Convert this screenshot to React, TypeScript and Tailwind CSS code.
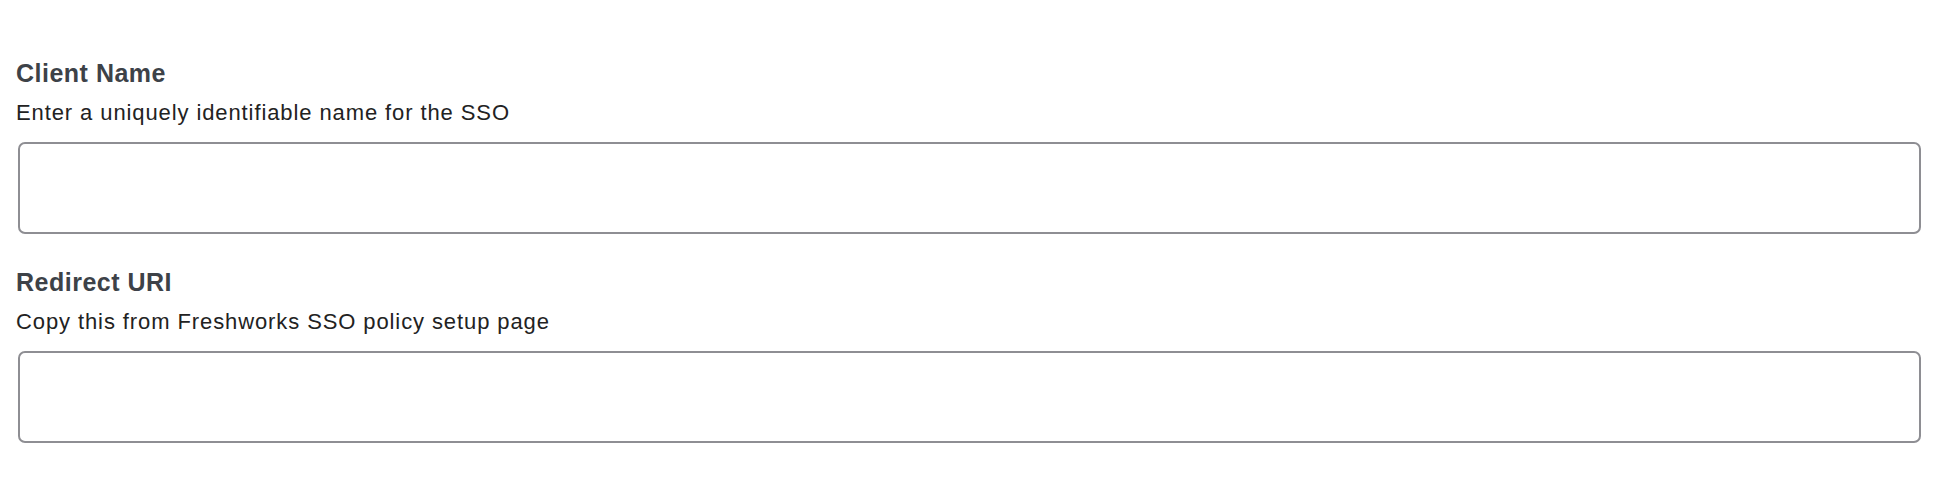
export default function App() {
  const fields = [
    { label: 'Client Name', hint: 'Enter a uniquely identifiable name for the SSO' },
    { label: 'Redirect URI', hint: 'Copy this from Freshworks SSO policy setup page' },
  ];

  return (
    <div className="min-h-screen bg-white pl-[16px] pr-[25px] pt-[58px] font-['Liberation_Sans',Arial,sans-serif]">
      {fields.map((f, i) => (
        <div key={f.label} className={i > 0 ? 'mt-[33px]' : ''}>
          <div className="text-[25px] font-bold leading-[30px] tracking-[0.5px] text-[#3d4248]">{f.label}</div>
          <div className="mt-[10px] text-[22px] leading-[30px] tracking-[0.9px] text-[#222222]">{f.hint}</div>
          <input
            type="text"
            className="mt-[14px] ml-[2px] block h-[92px] w-[calc(100%-2px)] rounded-[7px] border-2 border-[#8e8e93] bg-white px-3 outline-none"
          />
        </div>
      ))}
    </div>
  );
}
